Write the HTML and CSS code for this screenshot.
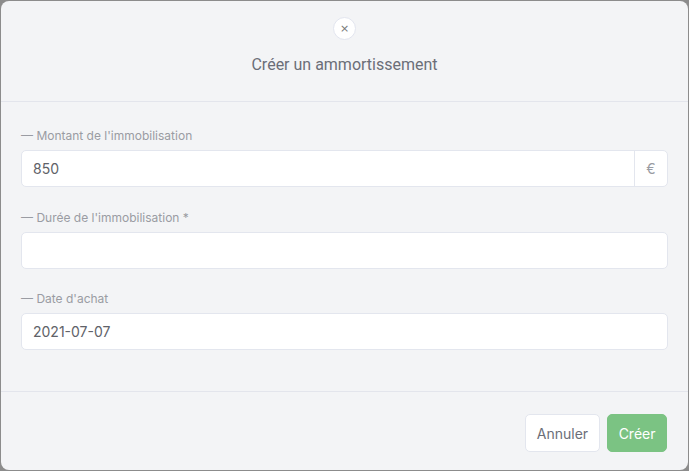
FILE: index.html
```html
<!DOCTYPE html>
<html lang="fr">
<head>
<meta charset="utf-8">
<title>Créer un ammortissement</title>
<link rel="stylesheet" href="styles.css">
</head>
<body>
<div class="modal">
  <header class="modal-header">
    <button class="close" type="button" aria-label="Fermer">×</button>
    <h1 class="title">Créer un ammortissement</h1>
  </header>
  <div class="modal-body">
    <div class="field">
      <label class="label">— Montant de l'immobilisation</label>
      <div class="input-group">
        <div class="input">850</div>
        <div class="addon">€</div>
      </div>
    </div>
    <div class="field">
      <label class="label">— Durée de l'immobilisation *</label>
      <div class="input-group">
        <div class="input"></div>
      </div>
    </div>
    <div class="field">
      <label class="label">— Date d'achat</label>
      <div class="input-group">
        <div class="input">2021-07-07</div>
      </div>
    </div>
  </div>
  <footer class="modal-footer">
    <button class="btn btn-cancel" type="button">Annuler</button>
    <button class="btn btn-primary" type="button">Créer</button>
  </footer>
</div>
</body>
</html>
```
FILE: styles.css
```css
* { box-sizing: border-box; }
html, body { margin: 0; padding: 0; }
body {
  background: #8c8c8c;
  font-family: Inter, "Liberation Sans", sans-serif;
  width: 689px;
  height: 471px;
  overflow: hidden;
}
.modal {
  margin: 1px 0 0 1px;
  width: 687px;
  height: 469px;
  background: #f3f4f6;
  border-radius: 8px;
  display: flex;
  flex-direction: column;
}
.modal-header {
  height: 101px;
  border-bottom: 1px solid #e3e5ec;
  display: flex;
  flex-direction: column;
  align-items: center;
  padding-top: 16px;
}
.close {
  width: 23px;
  height: 23px;
  border-radius: 50%;
  border: 1px solid #e2e5ef;
  background: #fff;
  color: #777;
  font-size: 11px;
  line-height: 1;
  padding: 0;
  display: flex;
  align-items: center;
  justify-content: center;
  font-family: "DejaVu Sans", sans-serif;
}
.title {
  margin: 16px 0 0;
  font-family: Roboto, sans-serif;
  font-size: 16px;
  font-weight: 400;
  color: #6b6e78;
  line-height: 18px;
}
.modal-body {
  flex: 1;
  padding: 26px 20px 0 20px;
  display: flex;
  flex-direction: column;
  gap: 22.5px;
}
.field {
  display: flex;
  flex-direction: column;
  gap: 6px;
}
.label {
  font-size: 12px;
  color: #9a9ca3;
  line-height: 16px;
}
.input-group {
  display: flex;
  height: 37px;
  background: #fff;
  border: 1px solid #e3e6ee;
  border-radius: 5px;
}
.input {
  flex: 1;
  padding: 0 11px;
  display: flex;
  align-items: center;
  font-size: 14px;
  color: #606268;
}
.addon {
  width: 33px;
  border-left: 1px solid #e3e6ee;
  display: flex;
  align-items: center;
  justify-content: center;
  font-size: 14px;
  color: #9a9ca3;
}
.modal-footer {
  height: 79px;
  border-top: 1px solid #e3e5ec;
  display: flex;
  justify-content: flex-end;
  align-items: flex-start;
  gap: 7px;
  padding: 22px 21px 0 0;
}
.btn {
  height: 38px;
  border-radius: 5px;
  font-family: Inter, sans-serif;
  font-size: 14px;
}
.btn-cancel {
  padding: 0 11px;
  background: #fff;
  border: 1px solid #e3e6ee;
  color: #6b6e78;
}
.btn-primary {
  padding: 0 10.5px;
  background: #7bc383;
  border: 1px solid #7bc383;
  color: #fff;
}
```
